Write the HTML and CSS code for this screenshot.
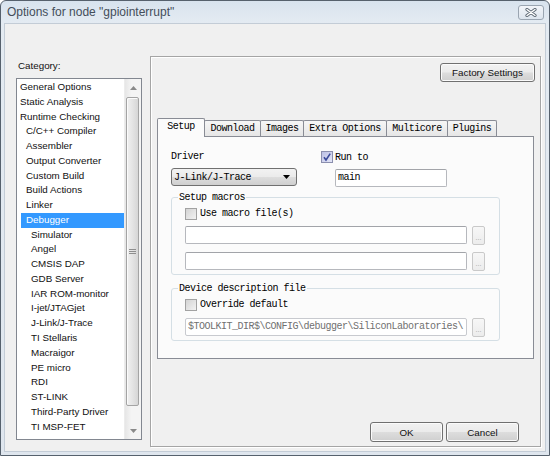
FILE: index.html
```html
<!DOCTYPE html>
<html>
<head>
<meta charset="utf-8">
<link rel="stylesheet" href="styles.css">
</head>
<body>
<div class="window">
  <div class="titlebar">
    <span class="title">Options for node "gpiointerrupt"</span>
    <div class="close">
      <svg width="12" height="9" viewBox="0 0 12 9">
        <path d="M2 1.5 L10 7.5 M10 1.5 L2 7.5" stroke="#5d6873" stroke-width="3.2" stroke-linecap="round"/>
        <path d="M2 1.5 L10 7.5 M10 1.5 L2 7.5" stroke="#ffffff" stroke-width="1.4" stroke-linecap="round"/>
      </svg>
    </div>
  </div>
  <div class="client">
    <div class="left">
      <div class="cat-label">Category:</div>
      <div class="listbox">
        <ul class="items">
          <li class="l0">General Options</li>
          <li class="l0">Static Analysis</li>
          <li class="l0">Runtime Checking</li>
          <li class="l1">C/C++ Compiler</li>
          <li class="l1">Assembler</li>
          <li class="l1">Output Converter</li>
          <li class="l1">Custom Build</li>
          <li class="l1">Build Actions</li>
          <li class="l1">Linker</li>
          <li class="l1 sel">Debugger</li>
          <li class="l2">Simulator</li>
          <li class="l2">Angel</li>
          <li class="l2">CMSIS DAP</li>
          <li class="l2">GDB Server</li>
          <li class="l2">IAR ROM-monitor</li>
          <li class="l2">I-jet/JTAGjet</li>
          <li class="l2">J-Link/J-Trace</li>
          <li class="l2">TI Stellaris</li>
          <li class="l2">Macraigor</li>
          <li class="l2">PE micro</li>
          <li class="l2">RDI</li>
          <li class="l2">ST-LINK</li>
          <li class="l2">Third-Party Driver</li>
          <li class="l2">TI MSP-FET</li>
        </ul>
        <div class="vscroll">
          <div class="sarrow">
            <svg width="7" height="4" viewBox="0 0 7 4"><path d="M0 4 L3.5 0 L7 4 Z" fill="#8a8a8a"/></svg>
          </div>
          <div class="thumb">
            <svg width="7" height="6" viewBox="0 0 7 6"><path d="M0 0.5 H7 M0 2.5 H7 M0 4.5 H7" stroke="#8e8e8e" stroke-width="1"/></svg>
          </div>
          <div class="sfill"></div>
          <div class="sarrow">
            <svg width="7" height="4" viewBox="0 0 7 4"><path d="M0 0 L3.5 4 L7 0 Z" fill="#8a8a8a"/></svg>
          </div>
        </div>
      </div>
    </div>
    <div class="panel">
      <div class="panel-top">
        <button class="btn factory">Factory Settings</button>
      </div>
      <div class="tabs">
        <div class="tab active" style="width:48px">Setup</div>
        <div class="tab" style="width:57px">Download</div>
        <div class="tab" style="width:44px">Images</div>
        <div class="tab" style="width:84px">Extra Options</div>
        <div class="tab" style="width:62px">Multicore</div>
        <div class="tab" style="width:50px">Plugins</div>
      </div>
      <div class="page">
        <div class="row1">
          <div class="drv">
            <div class="mlabel">Driver</div>
            <div class="select">
              <span>J-Link/J-Trace</span>
              <svg width="7" height="4" viewBox="0 0 7 4"><path d="M0 0 L7 0 L3.5 4 Z" fill="#000"/></svg>
            </div>
          </div>
          <div class="runto">
            <div class="check">
              <svg class="cb" width="12" height="12" viewBox="0 0 12 12">
                <defs><linearGradient id="gc" x1="0" y1="0" x2="1" y2="1"><stop offset="0" stop-color="#b9bde3"/><stop offset="1" stop-color="#e6e8f8"/></linearGradient></defs>
                <rect x="0.5" y="0.5" width="11" height="11" fill="url(#gc)" stroke="#8b8fae"/>
                <path d="M3 6.2 L5 9 L9.2 2.6" fill="none" stroke="#3b4a9a" stroke-width="1.6"/>
              </svg>
              <span>Run to</span>
            </div>
            <div class="field main">main</div>
          </div>
        </div>
        <fieldset class="group g1">
          <legend>Setup macros</legend>
          <div class="check">
            <svg class="cb" width="12" height="12" viewBox="0 0 12 12">
              <defs><linearGradient id="gu" x1="0" y1="0" x2="1" y2="1"><stop offset="0" stop-color="#d2d2d2"/><stop offset="1" stop-color="#f4f4f4"/></linearGradient></defs>
              <rect x="0.5" y="0.5" width="11" height="11" fill="url(#gu)" stroke="#a2a2a2"/>
            </svg>
            <span>Use macro file(s)</span>
          </div>
          <div class="frow r1"><div class="field"></div><div class="browse">...</div></div>
          <div class="frow r2"><div class="field"></div><div class="browse">...</div></div>
        </fieldset>
        <fieldset class="group g2">
          <legend>Device description file</legend>
          <div class="check">
            <svg class="cb" width="12" height="12" viewBox="0 0 12 12">
              <rect x="0.5" y="0.5" width="11" height="11" fill="url(#gu)" stroke="#a2a2a2"/>
            </svg>
            <span>Override default</span>
          </div>
          <div class="frow r3"><div class="field path">$TOOLKIT_DIR$\CONFIG\debugger\SiliconLaboratories\</div><div class="browse">...</div></div>
        </fieldset>
      </div>
      <div class="footer">
        <button class="btn dlg">OK</button>
        <button class="btn dlg">Cancel</button>
      </div>
    </div>
  </div>
</div>
</body>
</html>
```
FILE: styles.css
```css
* { box-sizing: border-box; }
html, body { margin: 0; padding: 0; }
body { width: 550px; height: 456px; overflow: hidden; background: #fff; }

.window {
  width: 550px; height: 456px;
  border: 1px solid #56616d;
  border-radius: 6px 6px 0 0;
  background: linear-gradient(#d8e3ee, #e4ebf2 22px, #dfe6ee);
  display: flex; flex-direction: column;
  overflow: hidden;
}
.titlebar {
  height: 22px; flex: none;
  display: flex; align-items: center; justify-content: space-between;
  padding: 0 5px 0 6px;
}
.title { font: 12px "Liberation Sans", Arial, sans-serif; color: #444e5a; }
.close {
  width: 26px; height: 15px;
  border: 1px solid #9aa5b1; border-radius: 3px;
  background: linear-gradient(#f2f5f9, #dde5ee);
  display: flex; align-items: center; justify-content: center;
}

.client {
  flex: 1;
  margin: 0 3px 3px;
  border: 1px solid #c3ccd6;
  background: #f0f0f0;
  display: flex; gap: 8px;
  padding: 32px 4px 4px 11px;
  font-family: "Liberation Sans", Arial, sans-serif;
}

.left { width: 126px; flex: none; padding-top: 3px; display: flex; flex-direction: column; }
.cat-label { font-size: 9.8px; line-height: 14px; padding-left: 2px; color: #111; }
.listbox {
  margin-top: 5px; height: 362px;
  border: 1px solid #828790; background: #fff;
  display: flex;
}
.items { flex: 1; list-style: none; margin: 0; padding: 1px 0 0 0; overflow: hidden; }
.items li {
  height: 14.78px; line-height: 14.78px;
  font-size: 9.8px; color: #111; white-space: nowrap;
}
.items .l0 { padding-left: 3px; }
.items .l1 { padding-left: 9px; }
.items .l2 { padding-left: 14px; }
.items .sel { background: #3399ff; color: #fff; margin-left: 4px; padding-left: 5px; }

.vscroll {
  width: 17px; flex: none;
  background: linear-gradient(90deg, #e6e6e6, #f4f4f4 40%, #f4f4f4);
  border-left: 1px solid #ececec;
  display: flex; flex-direction: column;
}
.sarrow { height: 17px; flex: none; display: flex; align-items: center; justify-content: center; }
.thumb {
  margin: 1px 2px 0 1px; height: 309px; flex: none;
  border: 1px solid #a4a4a4; border-radius: 2px;
  background: linear-gradient(90deg, #f1f1f1, #e4e4e4 50%, #d6d6d6);
  box-shadow: inset 1px 1px 0 #fbfbfb;
  display: flex; align-items: center; justify-content: center;
}
.sfill { flex: 1; }

.panel {
  width: 391px; height: 391px; flex: none;
  border: 1px solid #a5a5a5;
  box-shadow: inset 1px 1px 0 #fff, 1px 1px 0 #fff;
  display: flex; flex-direction: column;
  padding: 6px 0 4px 0;
}
.panel-top { display: flex; justify-content: flex-end; padding-right: 5px; }
.btn {
  font: 9.8px "Liberation Sans", Arial, sans-serif; color: #111;
  border: 1px solid #707070; border-radius: 3px;
  background: linear-gradient(#f2f2f2, #ebebeb 48%, #dddddd 52%, #cfcfcf);
  box-shadow: inset 0 0 0 1px #fbfbfb;
  padding: 0; margin: 0;
}
.factory { width: 95px; height: 19px; }

.tabs {
  margin: 36px 0 -1px 6px; height: 19px;
  display: flex; align-items: flex-end;
  position: relative; z-index: 1;
}
.tab {
  height: 16px; margin-bottom: 1px; margin-left: -1px;
  border: 1px solid #898c95; border-bottom: none;
  border-radius: 2px 2px 0 0;
  background: linear-gradient(#f6f6f6, #e6e6e6);
  font: 10px "Liberation Mono", "DejaVu Sans Mono", monospace; letter-spacing: -0.5px;
  color: #000; text-align: center; line-height: 15px;
  white-space: nowrap;
}
.tab.active {
  margin-left: 0; height: 19px; margin-bottom: 0;
  background: #fbfbfb; line-height: 16px;
}

.page {
  margin: 0 6px; height: 223px;
  border: 1px solid #898c95; background: #fbfbfb;
  padding: 13px 33px 0 13px;
  font: 10px "Liberation Mono", "DejaVu Sans Mono", monospace; letter-spacing: -0.5px; color: #000;
}
.row1 { display: flex; }
.drv { width: 150px; }
.mlabel { line-height: 14px; }
.select {
  margin-top: 4px; width: 126px; height: 18px;
  border: 1px solid #707070; border-radius: 3px;
  background: linear-gradient(#f2f2f2, #ebebeb 48%, #dddddd 52%, #cfcfcf);
  display: flex; align-items: center; justify-content: space-between;
  padding: 0 6px 0 2px;
}
.check { display: flex; align-items: center; height: 14px; gap: 3px; }
.runto .check { gap: 2px; }
.cb { flex: none; }
.field {
  height: 18px; background: #fff;
  border: 1px solid #b6b8bd; border-top-color: #a2a4a9;
  border-radius: 2px;
  padding: 0 2px; line-height: 16px;
  white-space: nowrap; overflow: hidden;
}
.main { margin: 5px 0 0 14px; width: 112px; }

.group {
  margin: 5px 0 0 0; padding: 0 14px 3px 13px;
  border: 1px solid #d5dfe5; border-radius: 3px;
}
.group legend { line-height: 11px; padding: 0 1px; margin-left: -7px; }
.group .check { height: 13px; margin-top: 4px; }
.g2 { margin-top: 8px; }
.frow { display: flex; gap: 5px; }
.frow .field { flex: 1; }
.r1 { margin-top: 6px; }
.r2 { margin-top: 7px; }
.r3 { margin-top: 7px; }
.browse {
  width: 13px; height: 19px; flex: none;
  border: 1px solid #c9c9c9; border-radius: 2px;
  background: linear-gradient(#f7f7f7, #ececec);
  font: 7px "Liberation Sans", Arial, sans-serif; letter-spacing: 0;
  color: #a0a0a0; text-align: center; line-height: 22px;
}
.path { color: #707070; border-color: #c8cacf; }

.footer {
  margin-top: auto; display: flex; justify-content: flex-end; gap: 3px;
  padding-right: 21px;
}
.dlg { width: 73px; height: 20px; }
```
